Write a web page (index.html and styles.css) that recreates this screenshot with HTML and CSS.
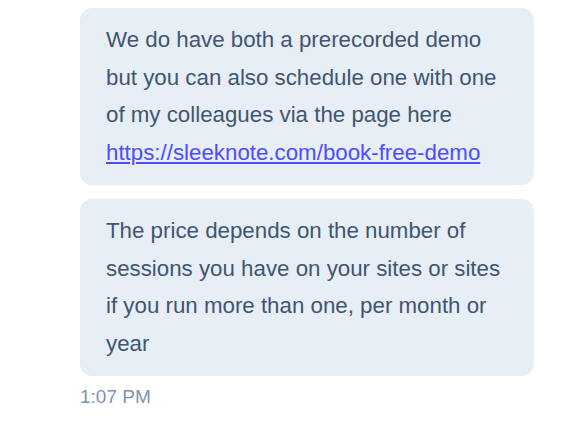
FILE: index.html
```html
<!DOCTYPE html>
<html>
<head>
<meta charset="utf-8">
<link rel="stylesheet" href="styles.css">
</head>
<body>
<div class="thread">
  <div class="bubble">We do have both a prerecorded demo but you can also schedule one with one of my colleagues via the page here <a href="#">https://sleeknote.com/book-free-demo</a></div>
  <div class="bubble">The price depends on the number of sessions you have on your sites or sites if you run more than one, per month or year</div>
  <div class="time">1:07 PM</div>
</div>
</body>
</html>
```
FILE: styles.css
```css
html, body { margin: 0; padding: 0; background: #fff; }
body { font-family: "Liberation Sans", Arial, sans-serif; }
.thread {
  display: flex;
  flex-direction: column;
  gap: 14px;
  padding: 8px 0 0 80px;
  width: 454px;
}
.bubble {
  background: #e8eef6;
  border-radius: 12px;
  padding: 13px 26px 13px 26px;
  font-size: 22.3px;
  line-height: 37.7px;
  color: #3e5673;
}
.bubble a { color: #4d4dff; text-decoration: underline; }
.time {
  margin-top: -4px;
  font-size: 19px;
  color: #7d94ae;
}
```
